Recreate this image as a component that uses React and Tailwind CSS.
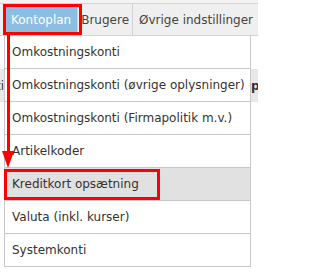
const rows = [
  'Omkostningskonti',
  'Omkostningskonti (øvrige oplysninger)',
  'Omkostningskonti (Firmapolitik m.v.)',
  'Artikelkoder',
  'Kreditkort opsætning',
  'Valuta (inkl. kurser)',
  'Systemkonti',
];

export default function App() {
  return (
    <div
      className="relative w-[258px] h-[272px] overflow-hidden bg-white text-[12px] text-[#333]"
      style={{ fontFamily: '"DejaVu Sans", Verdana, sans-serif' }}
    >
      {/* top strip */}
      <div className="h-[3px] bg-[#f3f3f3]" />

      {/* Tabs */}
      <div className="flex h-[33px] pl-[5px] border-y border-[#d3d3d3] bg-[#efefef] whitespace-nowrap">
        <div className="flex items-center px-[6px] bg-[#8cbde2] text-white border-r border-[#d3d3d3]">
          Kontoplan
        </div>
        <div className="flex items-center px-[3px] text-[#444] border-r border-[#d3d3d3]">
          Brugere
        </div>
        <div className="flex items-center pl-[6px] text-[#444]">
          Øvrige indstillinger
        </div>
      </div>

      {/* Page content behind menu */}
      <div className="pt-[33px]">
        <div className="flex items-center justify-between h-[33px] bg-[#e8e8e8] text-[#333] whitespace-nowrap overflow-hidden">
          <div className="w-[4px] overflow-hidden flex justify-end">
            <span>konti</span>
          </div>
          <div className="w-[7px] overflow-hidden font-bold">
            <span>pr</span>
          </div>
        </div>
      </div>

      {/* Dropdown menu */}
      <ul className="absolute left-[4px] top-[36px] w-[247px] bg-white border-x border-[#c8c8c8]">
        {rows.map((r, i) => (
          <li
            key={r}
            className={`flex items-center h-[33px] pl-[7px] border-b border-[#c8c8c8] whitespace-nowrap ${
              i === 4 ? 'bg-[#e1e1e1]' : 'bg-white'
            }`}
          >
            {r}
          </li>
        ))}
      </ul>

      {/* Red annotations */}
      <div className="absolute left-[3px] top-[4px] w-[79px] h-[31px] border-[3px] border-[#ff0000]" />
      <div className="absolute left-[7px] top-[34px] w-[3px] h-[118px] bg-[#ff0000]" />
      <svg className="absolute left-[2px] top-[151px]" width="12" height="17" viewBox="0 0 12 17">
        <polygon points="0,0 12,0 6,17" fill="#ff0000" />
      </svg>
      <div className="absolute left-[4px] top-[169px] w-[156px] h-[31px] border-[3px] border-[#ff0000]" />
    </div>
  );
}
